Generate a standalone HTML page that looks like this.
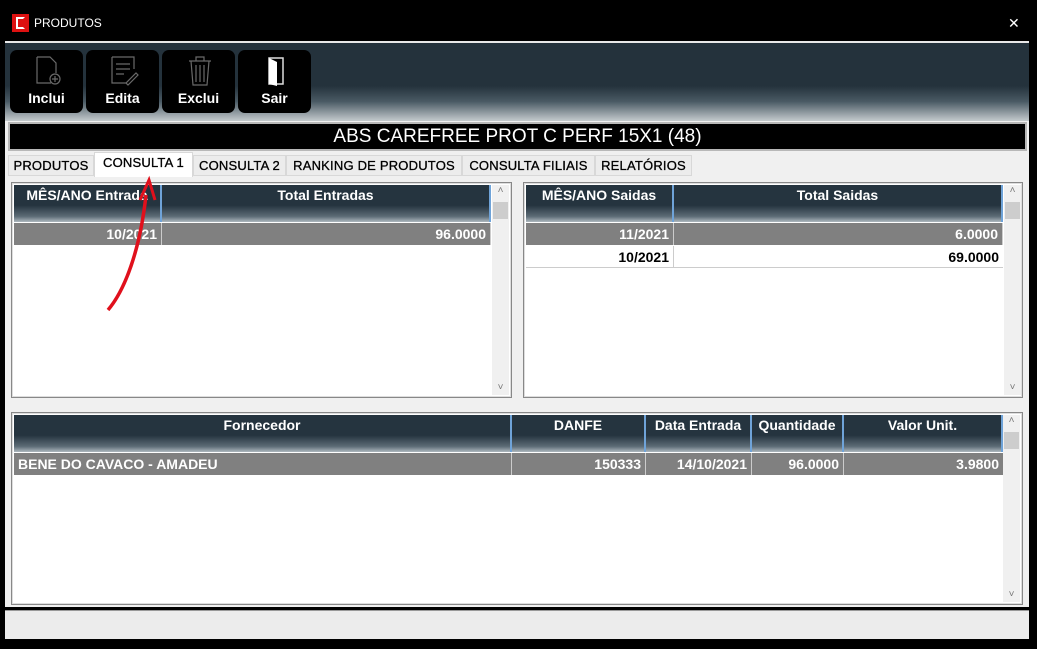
<!DOCTYPE html>
<html><head><style>
*{margin:0;padding:0;box-sizing:border-box}
body{width:1037px;height:649px;background:#000;position:relative;overflow:hidden;font-family:"Liberation Sans",sans-serif}
.abs{position:absolute}
.title{left:34px;top:16px;color:#fff;font-size:12px}
.tb{left:5px;top:41px;width:1024px;height:80px;border-top:2px solid #e8e8e8;background:linear-gradient(#24323c 0%,#24323c 55%,#4a5a64 75%,#c4cacd 100%)}
.btn{top:50px;width:73px;height:63px;background:#000;border-radius:7px;color:#fff;font-weight:bold;font-size:14px;text-align:center}
.btn span{position:absolute;left:0;right:0;top:40px}
.btn svg{position:absolute;left:24px;top:5px}
.main{left:5px;top:121px;width:1024px;height:486px;background:#f0f0f0}
.name{left:8px;top:122px;width:1019px;height:29px;background:#000;border:2px solid #b8b8b8;color:#fff;font-size:19px;text-align:center;line-height:25px}
.tab{top:155px;height:21px;border:1px solid #d8d8d8;background:#ececec;font-size:13px;line-height:19px;text-align:center;color:#000;letter-spacing:0.2px;-webkit-text-stroke:0.3px #000}
.grid{background:#fff;border:1px solid #888;box-shadow:inset 0 0 0 1px #ddd}
.hdr{background:linear-gradient(#25343f 0%,#25343f 55%,#5d6c76 85%,#aeb8be 100%);color:#fff;font-weight:bold;font-size:14px;height:37px}
.hc{position:absolute;top:0;height:37px;border-right:2px solid #6fa3d8;text-align:center;padding-top:2px}
.row{position:absolute;height:22px;font-size:14px;font-weight:bold;line-height:22px}
.c{position:absolute;top:0;height:22px;border-right:1px solid #ccc;text-align:right;padding-right:4px}
.g{background:#808080;color:#fff}
.sb{position:absolute;width:17px;background:#f0f0f0;color:#777;font-size:10px;text-align:center}
.sb .th{position:absolute;left:1px;width:15px;height:17px;background:#cdcdcd;top:17px}
.status{left:5px;top:610px;width:1024px;height:29px;background:#ececec;border-top:1px solid #999}
</style></head><body>
<div class="abs" style="left:12px;top:14px;width:17px;height:18px;background:#d11"><div style="position:absolute;left:4px;top:3px;width:9px;height:12px;border:2px solid #fff;border-right-color:#d11;border-bottom-color:#fff"></div></div>
<div class="abs title">PRODUTOS</div>
<div class="abs" style="left:1008px;top:15px;color:#fff;font-size:14px">✕</div>
<div class="abs tb"></div>
<div class="abs btn" style="left:10px"><svg width="28" height="32" fill="none" stroke="#6a6a6a" stroke-width="1.2"><path d="M3 2h13l6 6v10M3 2v26h14"/><circle cx="21" cy="24" r="5"/><path d="M21 21v6M18 24h6"/></svg><span>Inclui</span></div>
<div class="abs btn" style="left:86px"><svg width="30" height="32" fill="none" stroke="#6a6a6a" stroke-width="1.2"><path d="M2 2h22v12M2 2v26h14"/><path d="M6 9h14M6 14h14M6 19h8M16 28l10-10 2 2-10 10z"/></svg><span>Edita</span></div>
<div class="abs btn" style="left:162px"><svg width="28" height="32" fill="none" stroke="#6a6a6a" stroke-width="1.2"><path d="M3 6h22M10 6V2h8v4M5 6l2 24h14l2-24M10 10v17M14 10v17M18 10v17"/></svg><span>Exclui</span></div>
<div class="abs btn" style="left:238px"><svg width="28" height="32"><rect x="7" y="3" width="14" height="26" fill="none" stroke="#ddd" stroke-width="1.5"/><path d="M7 3l8 4v24l-8-2z" fill="#fff"/></svg><span>Sair</span></div>
<div class="abs main"></div>
<div class="abs name">ABS CAREFREE PROT C PERF 15X1 (48)</div>
<div class="abs tab" style="left:8px;width:86px">PRODUTOS</div>
<div class="abs tab" style="left:94px;width:99px;top:152px;height:25px;background:#fff;border-bottom:none">CONSULTA 1</div>
<div class="abs tab" style="left:193px;width:93px">CONSULTA 2</div>
<div class="abs tab" style="left:286px;width:176px">RANKING DE PRODUTOS</div>
<div class="abs tab" style="left:462px;width:133px">CONSULTA FILIAIS</div>
<div class="abs tab" style="left:595px;width:97px">RELATÓRIOS</div>

<div class="abs grid" style="left:11px;top:182px;width:501px;height:216px">
 <div class="abs hdr" style="left:2px;top:2px;width:477px"><div class="hc" style="left:0;width:148px">MÊS/ANO Entrada</div><div class="hc" style="left:148px;width:329px">Total Entradas</div></div>
 <div class="row g" style="left:2px;top:40px;width:477px"><div class="c" style="left:0;width:148px">10/2021</div><div class="c" style="left:148px;width:329px">96.0000</div></div>
 <div class="sb" style="left:480px;top:2px;height:210px">˄<div class="th"></div><div style="position:absolute;bottom:2px;width:17px">˅</div></div>
</div>
<div class="abs grid" style="left:523px;top:182px;width:500px;height:216px">
 <div class="abs hdr" style="left:2px;top:2px;width:477px"><div class="hc" style="left:0;width:148px">MÊS/ANO Saidas</div><div class="hc" style="left:148px;width:329px">Total Saidas</div></div>
 <div class="row g" style="left:2px;top:40px;width:477px"><div class="c" style="left:0;width:148px">11/2021</div><div class="c" style="left:148px;width:329px">6.0000</div></div>
 <div class="row" style="left:2px;top:63px;width:477px;border-bottom:1px solid #ccc"><div class="c" style="left:0;width:148px">10/2021</div><div class="c" style="left:148px;width:329px;border:none">69.0000</div></div>
 <div class="sb" style="left:480px;top:2px;height:210px">˄<div class="th"></div><div style="position:absolute;bottom:2px;width:17px">˅</div></div>
</div>
<div class="abs grid" style="left:11px;top:412px;width:1012px;height:193px">
 <div class="abs hdr" style="left:2px;top:2px;width:989px"><div class="hc" style="left:0;width:498px">Fornecedor</div><div class="hc" style="left:498px;width:134px">DANFE</div><div class="hc" style="left:632px;width:106px">Data Entrada</div><div class="hc" style="left:738px;width:92px">Quantidade</div><div class="hc" style="left:830px;width:159px">Valor Unit.</div></div>
 <div class="row g" style="left:2px;top:40px;width:989px"><div class="c" style="left:0;width:498px;text-align:left;padding-left:4px">BENE DO CAVACO - AMADEU</div><div class="c" style="left:498px;width:134px">150333</div><div class="c" style="left:632px;width:106px">14/10/2021</div><div class="c" style="left:738px;width:92px">96.0000</div><div class="c" style="left:830px;width:159px;border:none">3.9800</div></div>
 <div class="sb" style="left:991px;top:2px;height:187px">˄<div class="th"></div><div style="position:absolute;bottom:2px;width:17px">˅</div></div>
</div>
<div class="abs status"></div>
<svg class="abs" style="left:0;top:0" width="1037" height="649"><path d="M108 310 C125 290 140 250 146 195" stroke="#e0101c" stroke-width="3.5" fill="none"/><path d="M140 200 L149 180 L155 200" stroke="#e0101c" stroke-width="3" fill="none"/></svg>
</body></html>
